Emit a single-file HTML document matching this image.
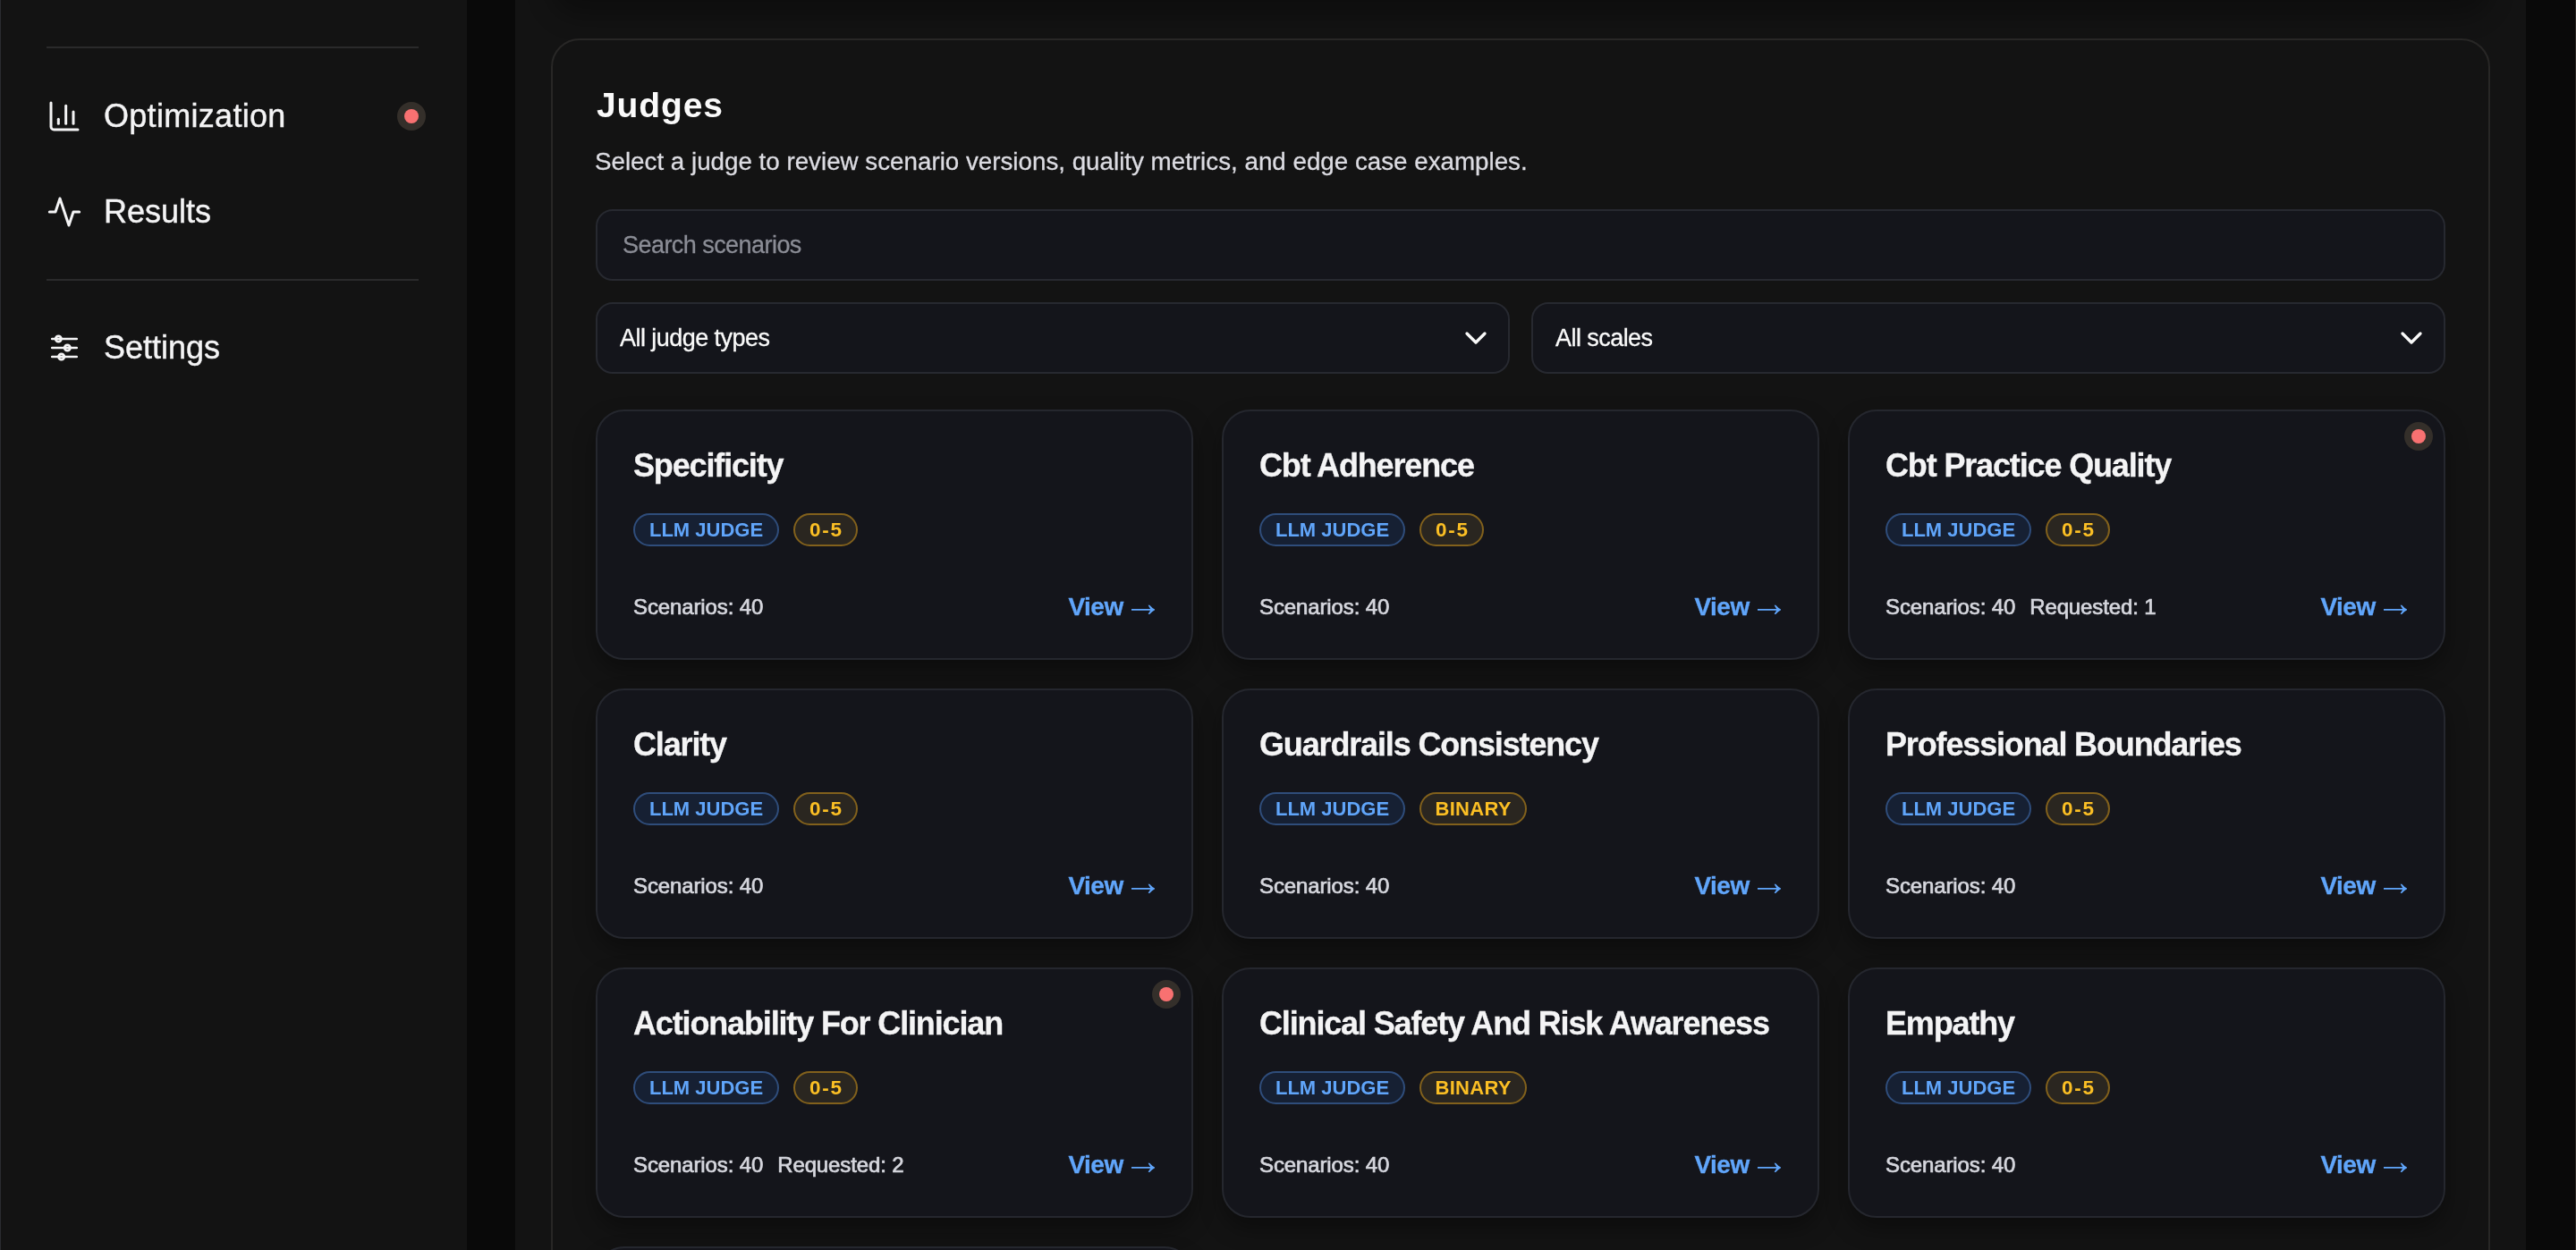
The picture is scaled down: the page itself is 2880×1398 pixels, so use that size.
<!DOCTYPE html>
<html lang="en">
<head>
<meta charset="utf-8">
<title>Judges</title>
<style>
*{box-sizing:border-box;margin:0;padding:0}
html,body{width:2880px;height:1398px;overflow:hidden;background:#090909}
body{font-family:"Liberation Sans",sans-serif;color:#f4f4f5;position:relative}
.sidebar,.main{will-change:transform}
.edge-l{position:absolute;left:0;top:0;width:1px;height:1398px;background:#2a2b30}
.edge-r{position:absolute;left:2879px;top:0;width:1px;height:1398px;background:#2e2a26}
.sidebar{position:absolute;left:1px;top:0;width:521px;height:1398px;background:#131313}
.main{position:absolute;left:576px;top:0;width:2248px;height:1398px;background:#131313;overflow:hidden}
.hr{position:absolute;left:51px;width:416px;height:2px;background:#2a2a2b}
.nav{position:absolute;left:51px;height:40px;display:flex;align-items:center;font-size:36px;color:#f4f4f5;white-space:nowrap}
.nav svg{width:40px;height:40px;display:block;flex:none}
.nav span{-webkit-text-stroke:.4px #f4f4f5;position:absolute;left:64px;top:50%;transform:translateY(-50%);line-height:40px}
.dot{position:absolute;width:32px;height:32px;border-radius:50%;background:#342f2a}
.dot i{position:absolute;left:8px;top:8px;width:16px;height:16px;border-radius:50%;background:#f87171}
.prevshadow{position:absolute;left:40px;top:-180px;width:2168px;height:170px;border-radius:32px;box-shadow:0 28px 28px rgba(0,0,0,.3)}
.panel{position:absolute;left:40px;top:43px;width:2168px;height:1500px;border:2px solid #282726;border-radius:32px;background:#131313}
h1{position:absolute;left:49px;top:49px;font-size:39px;line-height:48px;font-weight:700;color:#fafafa;white-space:nowrap;letter-spacing:.9px}
.sub{-webkit-text-stroke:.3px #dcdce2;position:absolute;left:47px;top:118px;font-size:27.75px;line-height:36px;color:#dcdce2;white-space:nowrap}
.field{position:absolute;height:80px;border:2px solid #272930;border-radius:19px;background:#14151b;font-size:27px;line-height:76px;white-space:nowrap;letter-spacing:-.55px}
.search{left:48px;top:189px;width:2068px;padding-left:28px;color:#8b8d96;-webkit-text-stroke:.3px #8b8d96}
.sel{top:293px;width:1022px;padding-left:25px;color:#fafafa;-webkit-text-stroke:.3px #fafafa}
.sel svg{position:absolute;right:16px;top:18px;width:40px;height:40px}
.card{position:absolute;width:668px;height:280px;border:2px solid #25272e;border-radius:32px;background:#14151b;box-shadow:0 12px 24px rgba(0,0,0,.35)}
.card h3{-webkit-text-stroke:.3px #f4f4f5;position:absolute;left:40px;top:37px;font-size:36px;line-height:48px;font-weight:700;color:#f4f4f5;white-space:nowrap;letter-spacing:-1.15px}
.badges{position:absolute;left:40px;top:114px;display:flex;gap:16px}
.b{height:37px;border-radius:19px;border:2px solid;font-size:22px;font-weight:700;line-height:33px;text-align:center;white-space:nowrap}
.b.blue{width:163px}
.b.n05{width:72px;font-size:22.5px;letter-spacing:1.8px;padding-left:1.8px}
.b.bin{width:120px;letter-spacing:.3px;padding-left:.3px}
.b.blue{color:#60a5fa;background:#162033;border-color:#2f4d7b}
.b.amber{color:#fbbf24;background:#2a2620;border-color:#82611c}
.meta{position:absolute;left:40px;top:203px;font-size:24px;-webkit-text-stroke:.7px #d6d7de;letter-spacing:-.12px;line-height:32px;color:#d6d7de;white-space:nowrap;font-weight:400}
.meta b{font-weight:400;margin-left:16px}
.view{position:absolute;right:40px;top:199px;font-size:28px;line-height:40px;font-weight:700;color:#60a5fa;white-space:nowrap;letter-spacing:-.5px;-webkit-text-stroke:.3px #60a5fa}
.view i{font-style:normal;font-weight:400;font-size:44px;line-height:0;letter-spacing:0;-webkit-text-stroke:0;position:relative;top:1px;margin-left:-7px;margin-right:-8px}
.card .dot{right:12px;top:12px}
</style>
</head>
<body>
<div class="edge-l"></div>
<div class="sidebar">
  <div class="hr" style="top:52px"></div>
  <div class="nav" style="top:110px">
    <svg viewBox="0 0 24 24" fill="none" stroke="#f4f4f5" stroke-width="1.8" stroke-linecap="round" stroke-linejoin="round"><path d="M3 3v16a2 2 0 0 0 2 2h16"/><path d="M18 17V9"/><path d="M13 17V5"/><path d="M8 17v-3"/></svg>
    <span style="letter-spacing:.3px">Optimization</span>
  </div>
  <div class="dot" style="left:443px;top:114px"><i></i></div>
  <div class="nav" style="top:217px">
    <svg viewBox="0 0 24 24" fill="none" stroke="#f4f4f5" stroke-width="1.8" stroke-linecap="round" stroke-linejoin="round"><path d="M22 12h-4l-3 9L9 3l-3 9H2"/></svg>
    <span>Results</span>
  </div>
  <div class="hr" style="top:312px"></div>
  <div class="nav" style="top:369px">
    <svg viewBox="0 0 24 24" fill="none" stroke="#f4f4f5" stroke-width="1.6" stroke-linecap="round" stroke-linejoin="round"><path d="M3.75 6h16.5M3.75 12h16.5M3.75 18h16.5"/><circle cx="8" cy="6" r="1.9"/><circle cx="14" cy="12" r="1.9"/><circle cx="10" cy="18" r="1.9"/></svg>
    <span>Settings</span>
  </div>
</div>
<div class="main">
  <div class="prevshadow"></div>
  <div class="panel">
    <h1>Judges</h1>
    <div class="sub">Select a judge to review scenario versions, quality metrics, and edge case examples.</div>
    <div class="field search">Search scenarios</div>
    <div class="field sel" style="left:48px">All judge types<svg viewBox="0 0 24 24" fill="none" stroke="#fafafa" stroke-width="2" stroke-linecap="round" stroke-linejoin="round"><path d="m6 9 6 6 6-6"/></svg></div>
    <div class="field sel" style="left:1094px">All scales<svg viewBox="0 0 24 24" fill="none" stroke="#fafafa" stroke-width="2" stroke-linecap="round" stroke-linejoin="round"><path d="m6 9 6 6 6-6"/></svg></div>

    <div class="card" style="left:48px;top:413px"><h3>Specificity</h3><div class="badges"><div class="b blue">LLM JUDGE</div><div class="b amber n05">0-5</div></div><div class="meta">Scenarios: 40</div><div class="view">View <i>→</i></div></div>
    <div class="card" style="left:748px;top:413px"><h3>Cbt Adherence</h3><div class="badges"><div class="b blue">LLM JUDGE</div><div class="b amber n05">0-5</div></div><div class="meta">Scenarios: 40</div><div class="view">View <i>→</i></div></div>
    <div class="card" style="left:1448px;top:413px"><div class="dot"><i></i></div><h3>Cbt Practice Quality</h3><div class="badges"><div class="b blue">LLM JUDGE</div><div class="b amber n05">0-5</div></div><div class="meta">Scenarios: 40<b>Requested: 1</b></div><div class="view">View <i>→</i></div></div>

    <div class="card" style="left:48px;top:725px"><h3>Clarity</h3><div class="badges"><div class="b blue">LLM JUDGE</div><div class="b amber n05">0-5</div></div><div class="meta">Scenarios: 40</div><div class="view">View <i>→</i></div></div>
    <div class="card" style="left:748px;top:725px"><h3>Guardrails Consistency</h3><div class="badges"><div class="b blue">LLM JUDGE</div><div class="b amber bin">BINARY</div></div><div class="meta">Scenarios: 40</div><div class="view">View <i>→</i></div></div>
    <div class="card" style="left:1448px;top:725px"><h3>Professional Boundaries</h3><div class="badges"><div class="b blue">LLM JUDGE</div><div class="b amber n05">0-5</div></div><div class="meta">Scenarios: 40</div><div class="view">View <i>→</i></div></div>

    <div class="card" style="left:48px;top:1037px"><div class="dot"><i></i></div><h3>Actionability For Clinician</h3><div class="badges"><div class="b blue">LLM JUDGE</div><div class="b amber n05">0-5</div></div><div class="meta">Scenarios: 40<b>Requested: 2</b></div><div class="view">View <i>→</i></div></div>
    <div class="card" style="left:748px;top:1037px"><h3>Clinical Safety And Risk Awareness</h3><div class="badges"><div class="b blue">LLM JUDGE</div><div class="b amber bin">BINARY</div></div><div class="meta">Scenarios: 40</div><div class="view">View <i>→</i></div></div>
    <div class="card" style="left:1448px;top:1037px"><h3>Empathy</h3><div class="badges"><div class="b blue">LLM JUDGE</div><div class="b amber n05">0-5</div></div><div class="meta">Scenarios: 40</div><div class="view">View <i>→</i></div></div>

    <div class="card" style="left:48px;top:1349px"></div>
  </div>
</div>
<div class="edge-r"></div>
</body>
</html>
